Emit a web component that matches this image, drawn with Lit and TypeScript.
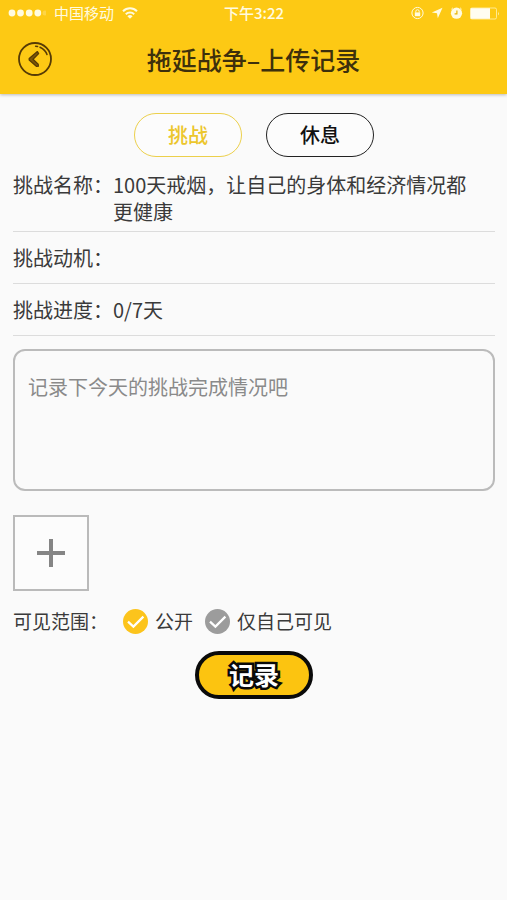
import { LitElement, html, css, svg } from "lit";
import { customElement, property, state } from "lit/decorators.js";
import { classMap } from "lit/directives/class-map.js";

@customElement("status-bar")
class StatusBar extends LitElement {
  static styles = css`
    :host {
      display: grid;
      grid-template-columns: 1fr auto 1fr;
      align-items: center;
      height: 26px;
      padding: 0 7px 0 8px;
      color: #fffbe0;
      font-size: 15px;
      line-height: 20px;
    }
    .side {
      display: flex;
      align-items: center;
      gap: 8px;
    }
    .right {
      justify-content: flex-end;
      gap: 7px;
    }
    .time {
      font-weight: 500;
    }
    svg {
      display: block;
      flex: none;
    }
  `;

  render() {
    return html`
      <div class="side">
        <svg width="38" height="8" viewBox="0 0 38 8" fill="#fffbe0" aria-hidden="true">
          ${[4, 12.5, 21.2, 29.8].map((x) => svg`<circle cx=${x} cy="4" r="3.4" />`)}
          <circle cx="37" cy="4" r="2.5" opacity="0.25" />
        </svg>
        <span>中国移动</span>
        <svg width="16" height="14" viewBox="0 0 16 14" fill="none" stroke="#fffbe0" stroke-width="2" aria-hidden="true">
          <path d="M1 5.2A10 10 0 0 1 15 5.2M3.8 8.2A6 6 0 0 1 12.2 8.2" />
          <path d="M8 12.8L5.4 10.2A3.8 3.8 0 0 1 10.6 10.2Z" fill="#fffbe0" stroke="none" />
        </svg>
      </div>
      <span class="time">下午3:22</span>
      <div class="side right">
        <svg width="13" height="14" viewBox="0 0 13 14" fill="none" stroke="#fffbe0" aria-hidden="true">
          <circle cx="6.5" cy="7" r="5.6" stroke-width="1" />
          <path d="M4.8 6.5V5.4a1.7 1.7 0 0 1 3.4 0V6.5" stroke-width="1" />
          <rect x="3.8" y="6.4" width="5.4" height="3.8" fill="#fffbe0" stroke="none" />
        </svg>
        <svg width="12" height="12" viewBox="0 0 12 12" fill="#fffbe0" aria-hidden="true">
          <path d="M11.5 0.8L0.8 5.6L6 6.2L6.8 11.3Z" />
        </svg>
        <svg width="13" height="14" viewBox="0 0 13 14" aria-hidden="true">
          <circle cx="6.5" cy="7.2" r="5.6" fill="#fffbe0" />
          <path d="M1.4 3.2L2.8 1.9M11.6 3.2L10.2 1.9" stroke="#fffbe0" stroke-width="1" />
          <path d="M6.9 4.4V7.8H4.6" fill="none" stroke="#e8b400" stroke-width="1.2" />
        </svg>
        <svg width="30" height="13" viewBox="0 0 30 13" aria-hidden="true">
          <rect x="0.5" y="1" width="26" height="11" rx="1.5" fill="none" stroke="#fff3b0" stroke-width="0.8" />
          <rect x="0.6" y="1.2" width="19.4" height="10.6" fill="#fffdf2" />
          <path d="M28 4.5Q29.6 6.5 28 8.5Z" fill="#fff3b0" />
        </svg>
      </div>
    `;
  }
}

@customElement("info-row")
class InfoRow extends LitElement {
  @property() label = "";
  @property() value = "";

  static styles = css`
    :host {
      display: flex;
      padding: 12px 24px 12px 0;
      border-bottom: 1px solid #dcdcdc;
      line-height: 27px;
    }
    .label {
      flex: none;
      white-space: nowrap;
    }
    .value {
      flex: 1;
    }
  `;

  render() {
    return html`
      <span class="label">${this.label}：</span>
      <span class="value">${this.value}</span>
    `;
  }
}

@customElement("app-root")
class AppRoot extends LitElement {
  @state() private tab = "挑战";
  @state() private scope = "公开";

  static styles = css`
    :host {
      display: block;
      min-height: 100vh;
      background: #fafafa;
      color: #3a3a3a;
      font-family: "Noto Sans CJK SC", sans-serif;
      font-size: 20px;
    }
    * {
      box-sizing: border-box;
    }
    button,
    textarea,
    input {
      margin: 0;
      font: inherit;
    }
    button {
      padding: 0;
      cursor: pointer;
    }
    svg {
      display: block;
    }
    .header {
      background: #fdc914;
      box-shadow: 0 1px 3px rgba(0, 0, 0, 0.25);
    }
    .nav {
      display: grid;
      grid-template-columns: 40px 1fr 40px;
      align-items: center;
      height: 68px;
      padding: 0 15px 2px;
    }
    .back {
      justify-self: start;
      border: 0;
      background: none;
    }
    .title {
      margin: 0;
      text-align: center;
      font-size: 25px;
      line-height: 36px;
      font-weight: 500;
      color: #3d300c;
    }
    .content {
      display: flex;
      flex-direction: column;
      padding: 19px 12px 24px 13px;
    }
    .tabs {
      display: flex;
      justify-content: center;
      gap: 24px;
    }
    .tab {
      width: 108px;
      height: 44px;
      border: 1px solid #222;
      border-radius: 22px;
      background: #fcfcfc;
      color: #111;
      font-weight: 500;
      line-height: 28px;
    }
    .tab.active {
      border-color: #ecd04c;
      color: #ecc62c;
    }
    .name {
      padding-top: 14px;
      padding-bottom: 6px;
    }
    .note {
      display: block;
      width: 100%;
      height: 142px;
      margin-top: 13px;
      padding: 22px 13px;
      border: 2px solid #bbb;
      border-radius: 12px;
      background: #fafafa;
      color: #3a3a3a;
      line-height: 27px;
      resize: none;
      outline: none;
    }
    .note::placeholder {
      color: #8a8a8a;
      opacity: 1;
    }
    .add {
      display: grid;
      place-items: center;
      width: 76px;
      height: 76px;
      margin-top: 24px;
      border: 2px solid #bababa;
      background: #fcfcfc;
    }
    .scope {
      display: flex;
      align-items: center;
      height: 30px;
      margin-top: 15px;
      font-size: 19px;
      line-height: 28px;
    }
    .scope-title {
      width: 110px;
      white-space: nowrap;
    }
    .option {
      display: flex;
      align-items: center;
      gap: 7px;
      margin-right: 12px;
    }
    .dot {
      display: grid;
    }
    .dot > * {
      grid-area: 1 / 1;
    }
    .dot svg {
      pointer-events: none;
    }
    .radio {
      width: 25px;
      height: 25px;
      border-radius: 50%;
      background: #9c9c9c;
      appearance: none;
    }
    .radio:checked {
      background: #fcc41c;
    }
    .submit {
      align-self: center;
      width: 118px;
      height: 48px;
      margin-top: 15px;
      padding-bottom: 2px;
      border: 4px solid #0a0a0a;
      border-radius: 24px;
      background: #fcc410;
      color: #fff;
      font-size: 25px;
      line-height: 36px;
      font-weight: 700;
      -webkit-text-stroke: 5px #0a0a0a;
      paint-order: stroke fill;
    }
  `;

  private renderOption(name: string) {
    return html`
      <label class="option">
        <span class="dot">
          <input
            class="radio"
            type="radio"
            name="scope"
            .checked=${this.scope === name}
            @change=${() => (this.scope = name)}
          />
          <svg width="25" height="25" viewBox="0 0 25 25" fill="none" stroke="#fff" stroke-width="2.2" aria-hidden="true">
            <path d="M5 12.6L10.4 17.6L20.4 7.6" />
          </svg>
        </span>
        <span>${name}</span>
      </label>
    `;
  }

  render() {
    return html`
      <header class="header">
        <status-bar></status-bar>
        <div class="nav">
          <button class="back" aria-label="返回">
            <svg width="40" height="36" viewBox="0 0 40 36" fill="none" stroke="#573b05" stroke-linecap="round" stroke-linejoin="round">
              <circle cx="20" cy="18" r="16" stroke-width="1.8" />
              <path d="M22.4 10.6L14.2 17.6V19L21.6 25.4L23.4 25.2L23.2 23.2L18 18.3L23.6 12.6Z" stroke-width="1.3" fill="#7d5808" />
              <path d="M20.6 5.2L22.6 5.5M25 6.3Q30.4 8.8 32 13.6" stroke-width="1.5" />
            </svg>
          </button>
          <h1 class="title">拖延战争–上传记录</h1>
        </div>
      </header>
      <main class="content">
        <div class="tabs">
          ${["挑战", "休息"].map(
            (name) => html`
              <button
                class=${classMap({ tab: true, active: this.tab === name })}
                @click=${() => (this.tab = name)}
              >
                ${name}
              </button>
            `
          )}
        </div>
        <info-row class="name" label="挑战名称" value="100天戒烟，让自己的身体和经济情况都更健康"></info-row>
        <info-row label="挑战动机"></info-row>
        <info-row label="挑战进度" value="0/7天"></info-row>
        <textarea class="note" aria-label="记录" placeholder="记录下今天的挑战完成情况吧"></textarea>
        <button class="add" aria-label="添加图片">
          <svg width="28" height="28" viewBox="0 0 28 28" stroke="#858585" stroke-width="4" aria-hidden="true">
            <path d="M14 0V28M0 14H28" />
          </svg>
        </button>
        <div class="scope" role="radiogroup" aria-labelledby="scope-title">
          <span class="scope-title" id="scope-title">可见范围：</span>
          ${["公开", "仅自己可见"].map((name) => this.renderOption(name))}
        </div>
        <button class="submit">记录</button>
      </main>
    `;
  }
}
